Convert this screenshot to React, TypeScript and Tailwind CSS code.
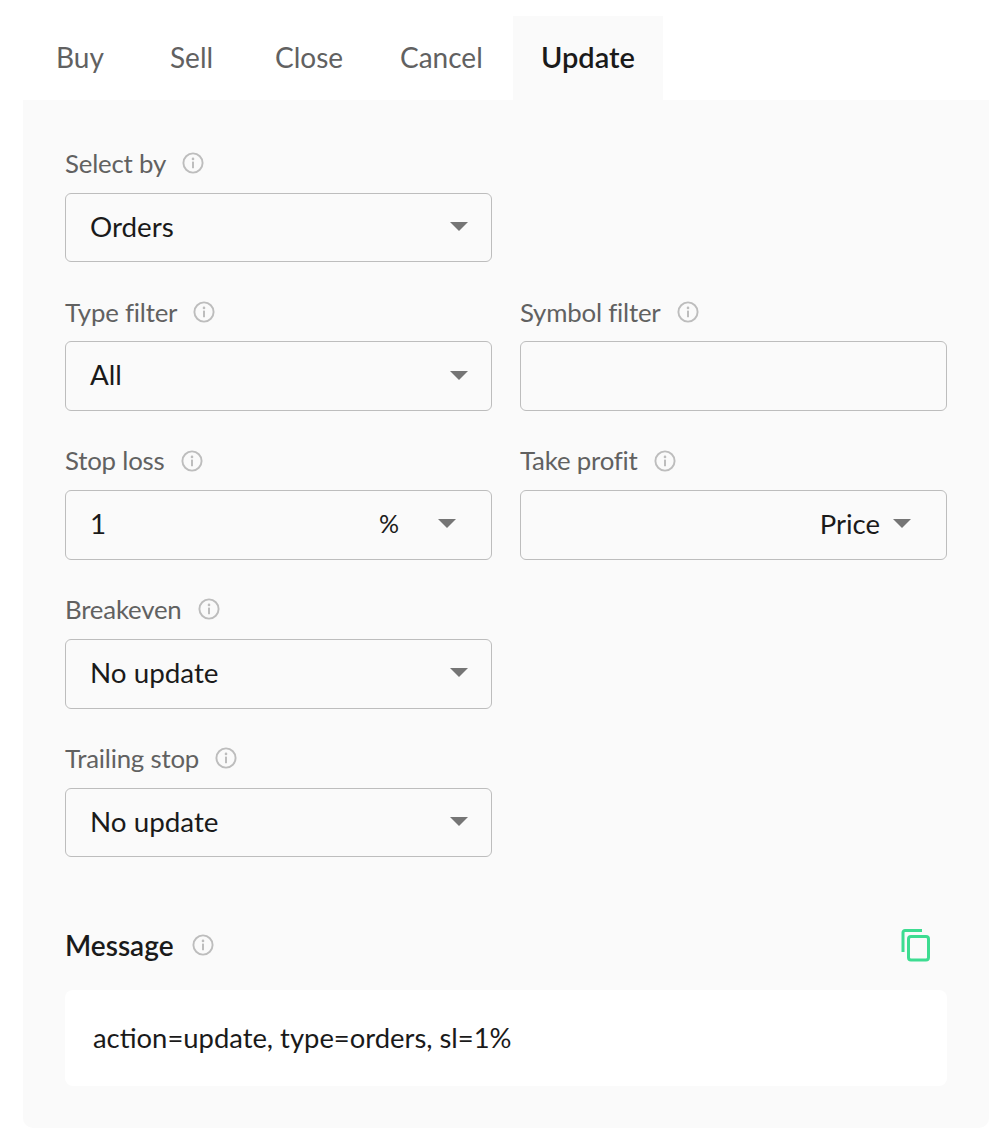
const tabs = [
  { label: "Buy", width: "w-[114px]" },
  { label: "Sell", width: "w-[105px]" },
  { label: "Close", width: "w-[125px]" },
  { label: "Cancel", width: "w-[141px]" },
  { label: "Update", width: "w-[150px]", active: true },
];

function InfoIcon() {
  return (
    <svg width="22" height="22" viewBox="0 0 22 22" fill="none" className="shrink-0">
      <circle cx="11" cy="11" r="9.6" stroke="#bdbdbd" strokeWidth="1.9" />
      <circle cx="11" cy="6.9" r="1.3" fill="#bdbdbd" />
      <rect x="10" y="9.5" width="2" height="6.8" rx="0.6" fill="#bdbdbd" />
    </svg>
  );
}

function Caret() {
  return <span className="h-0 w-0 border-x-[9px] border-t-[9px] border-x-transparent border-t-[#757575]" />;
}

function Label({ text }: { text: string }) {
  return (
    <div className="mb-[10px] flex h-[36px] items-center gap-[16px] pb-[3px] text-[25.8px] tracking-[-0.2px] text-[#616161]">
      <span>{text}</span>
      <InfoIcon />
    </div>
  );
}

const box = "flex h-[69.7px] items-center rounded-[6px] border border-[#bdbdbd] pb-[2px] text-[27.8px] text-[#1a1a1a]";

function SelectField({ label, value }: { label: string; value: string }) {
  return (
    <div>
      <Label text={label} />
      <div className={`${box} justify-between pl-[24px] pr-[23px]`}>
        <span>{value}</span>
        <Caret />
      </div>
    </div>
  );
}

export default function App() {
  return (
    <div className="h-[1146px] w-[1008px] bg-white pt-[16px] font-['Lato',sans-serif]">
      <div className="flex h-[84px] pl-[28px]">
        {tabs.map((t) => (
          <div
            key={t.label}
            className={`flex items-center pb-[3px] pl-[28px] ${t.width} ${
              t.active ? "bg-[#fafafa] text-[29px] font-semibold text-[#1a1a1a]" : "text-[28px] text-[#616161]"
            }`}
          >
            {t.label}
          </div>
        ))}
      </div>
      <div className="ml-[23px] w-[966px] rounded-b-[10px] bg-[#fafafa] px-[42px] pb-[42px] pt-[46.75px]">
        <div className="grid grid-cols-2 gap-x-[28px] gap-y-[33px]">
          <SelectField label="Select by" value="Orders" />
          <div />
          <SelectField label="Type filter" value="All" />
          <div>
            <Label text="Symbol filter" />
            <div className={box} />
          </div>
          <div>
            <Label text="Stop loss" />
            <div className={`${box} pl-[24px] pr-[35px]`}>
              <span className="flex-1">1</span>
              <span className="mr-[39px] text-[25px]">%</span>
              <Caret />
            </div>
          </div>
          <div>
            <Label text="Take profit" />
            <div className={`${box} justify-end pr-[35px]`}>
              <span className="mr-[13px] text-[27.5px]">Price</span>
              <Caret />
            </div>
          </div>
          <SelectField label="Breakeven" value="No update" />
          <div />
          <SelectField label="Trailing stop" value="No update" />
        </div>
        <div className="mt-[60px] flex h-[56px] items-center justify-between pr-[15px]">
          <div className="flex items-center gap-[18px] text-[28px] font-semibold text-[#1a1a1a]">
            <span>Message</span>
            <InfoIcon />
          </div>
          <svg width="32" height="34" viewBox="0 0 32 34" fill="none" stroke="#3ddc91" strokeWidth="3">
            <path d="M3 24V4.500A2 2 0 0 1 5 2.500H22" />
            <rect x="8.500" y="8.500" width="20" height="23.500" rx="2.500" />
          </svg>
        </div>
        <div className="mt-[17px] flex h-[96px] items-center rounded-[8px] bg-white pb-[2px] pl-[28px] text-[27.4px] text-[#1a1a1a]">
          action=update, type=orders, sl=1%
        </div>
      </div>
    </div>
  );
}
